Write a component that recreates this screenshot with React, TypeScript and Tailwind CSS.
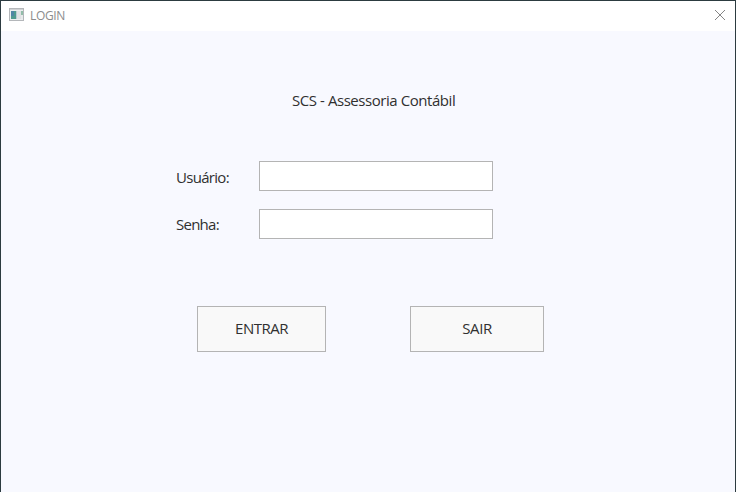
function WindowIcon() {
  return (
    <svg width="16" height="14" viewBox="0 0 16 14" shapeRendering="crispEdges">
      <rect x="0" y="0" width="15" height="13" fill="#b4b7ba" />
      <rect x="1" y="1" width="13" height="1" fill="#d0d2d4" />
      <rect x="1" y="2" width="13" height="10" fill="#eceeef" />
      <rect x="2" y="3" width="5" height="8" fill="#4f9a8f" />
      <rect x="2" y="3" width="3" height="5" fill="#4f86a5" />
      <rect x="7" y="3" width="1" height="8" fill="#b9ccd2" />
      <rect x="8" y="3" width="4" height="8" fill="#dfe1e3" />
      <rect x="12" y="3" width="2" height="4" fill="#92bda9" />
      <rect x="12" y="7" width="2" height="4" fill="#e8eaeb" />
    </svg>
  );
}

function Field({ label, className }: { label: string; className: string }) {
  return (
    <label className="flex h-[30px] items-center">
      <span className={`w-[83px] ${className}`}>{label}</span>
      <input className="h-[30px] w-[234px] border border-[#b4b4b4] bg-white px-2 outline-none" />
    </label>
  );
}

export default function App() {
  return (
    <div className="flex h-[492px] w-[736px] flex-col border-x border-t border-[#2c3b40] bg-[#f8f9ff] font-['Open_Sans','Noto_Sans',sans-serif] text-[15px] text-[#303030]">
      <header className="flex h-[30px] shrink-0 items-center justify-between bg-white pr-[9px] pb-[2px] pl-2">
        <div className="flex items-center gap-[5px]">
          <WindowIcon />
          <span className="pt-px text-[12px] tracking-[-0.35px] text-[#8c8c8c]">LOGIN</span>
        </div>
        <button aria-label="Fechar">
          <svg width="12" height="12" viewBox="0 0 12 12" fill="none" stroke="#858585">
            <path d="M1 1L11 11M11 1L1 11" />
          </svg>
        </button>
      </header>
      <main className="flex flex-col">
        <h1 className="mt-[58px] ml-[291px] h-[22px] whitespace-nowrap leading-[22px] tracking-[-0.44px]">SCS - Assessoria Contábil</h1>
        <form className="mt-[50px] ml-[175px] flex flex-col gap-[18px]">
          <Field label="Usuário:" className="pt-[3px] tracking-[-0.7px]" />
          <Field label="Senha:" className="pt-px tracking-[-0.75px]" />
        </form>
        <div className="mt-[67px] ml-[196px] flex gap-[84px]">
          <button className="h-[46px] w-[129px] border border-[#b4b4b4] bg-[#f9f9f9] pb-[2px] tracking-[-0.5px]">ENTRAR</button>
          <button className="h-[46px] w-[134px] border border-[#b4b4b4] bg-[#f9f9f9] pb-[2px] tracking-[-0.4px]">SAIR</button>
        </div>
      </main>
    </div>
  );
}
